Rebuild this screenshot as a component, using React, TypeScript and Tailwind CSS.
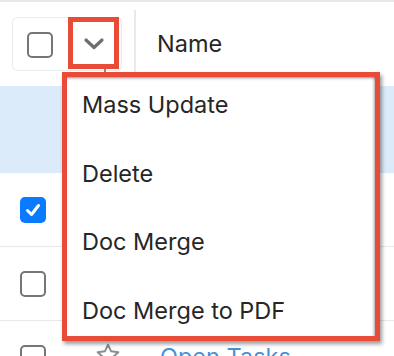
import React from "react";

// List view header with the mass-action dropdown open, annotated in red.

function Box({ checked = false }: { checked?: boolean }): React.ReactElement {
  if (checked) {
    return (
      <span className="grid h-[26px] w-[26px] place-items-center rounded-[5px] bg-[#0a7bff]">
        <svg width="18" height="18" viewBox="0 0 18 18" fill="none">
          <path d="M3.5 9.5 L7.5 13.5 L14.5 4.5" stroke="white" strokeWidth="3" strokeLinecap="round" strokeLinejoin="round" />
        </svg>
      </span>
    );
  }
  return <span className="block h-[26px] w-[26px] rounded-[5px] border-2 border-[#767676] bg-white" />;
}

const items = ["Mass Update", "Delete", "Doc Merge", "Doc Merge to PDF"];

export default function App(): React.ReactElement {
  return (
    <div className="relative h-[356px] w-[394px] overflow-hidden bg-white font-['Inter',sans-serif] text-[#262626]">
      {/* header */}
      <div className="flex h-[86px] items-start border-t-2 border-[#e6e8eb] pl-3">
        <div className="mt-[15px] flex h-[54px] w-[110px] items-start rounded-[5px] border border-[#e8eaed]">
          <span className="ml-[14px] mt-[14px]">
            <Box />
          </span>
          <button
            type="button"
            className="-mt-px ml-[15px] grid h-[52px] w-[51px] place-items-center border-[5px] border-[#e84b36] text-[#6b6f73]"
          >
            <svg width="22" height="14" viewBox="0 0 22 14" fill="none" className="mt-[2px]">
              <path d="M3 3 L11 10.5 L19 3" stroke="currentColor" strokeWidth="3.2" strokeLinecap="round" strokeLinejoin="round" />
            </svg>
          </button>
        </div>
        <span className="ml-3 mt-2 h-[76px] w-[2px] bg-[#e8eaed]" />
        <span className="ml-[21px] self-center text-[23.5px] leading-none">Name</span>
      </div>

      {/* rows */}
      <div className="h-[87px] bg-[#dcebfa]" />
      <div className="flex h-[74px] items-center border-b border-[#e6e8eb] pl-5">
        <Box checked />
      </div>
      <div className="flex h-[74px] items-center border-b border-[#e6e8eb] pl-5">
        <Box />
      </div>
      <div className="flex h-[60px] items-start pl-5 pt-6">
        <Box />
        <svg width="26" height="26" viewBox="0 0 24 24" fill="none" className="ml-[49px] -mt-[3px]">
          <path
            d="M12 2.5 L14.9 8.6 L21.5 9.4 L16.6 13.9 L17.9 20.5 L12 17.2 L6.1 20.5 L7.4 13.9 L2.5 9.4 L9.1 8.6 Z"
            stroke="#8a8d91"
            strokeWidth="1.8"
            strokeLinejoin="round"
          />
        </svg>
        <span className="ml-[39px] text-[23.5px] leading-none text-[#4a8fd8]">Open Tasks</span>
      </div>

      {/* caret under the toggle */}
      <span className="absolute left-[104px] top-[69px] h-[4px] w-[2px] bg-[#8a8a8a]" />

      {/* open dropdown */}
      <div className="absolute left-[62px] top-[72px] h-[269px] w-[318px] border-[5px] border-[#e84b36] bg-white shadow-[2px_3px_4px_rgba(0,0,0,0.4)]">
        <div className="h-full w-full shadow-[inset_0_3px_3px_-2px_rgba(0,0,0,0.45),inset_-3px_0_3px_-2px_rgba(0,0,0,0.35)]">
          {items.map((t) => (
            <div key={t} className="h-[68.5px] pl-[15px] pt-4 text-[23.5px] leading-none">
              {t}
            </div>
          ))}
        </div>
      </div>
    </div>
  );
}
